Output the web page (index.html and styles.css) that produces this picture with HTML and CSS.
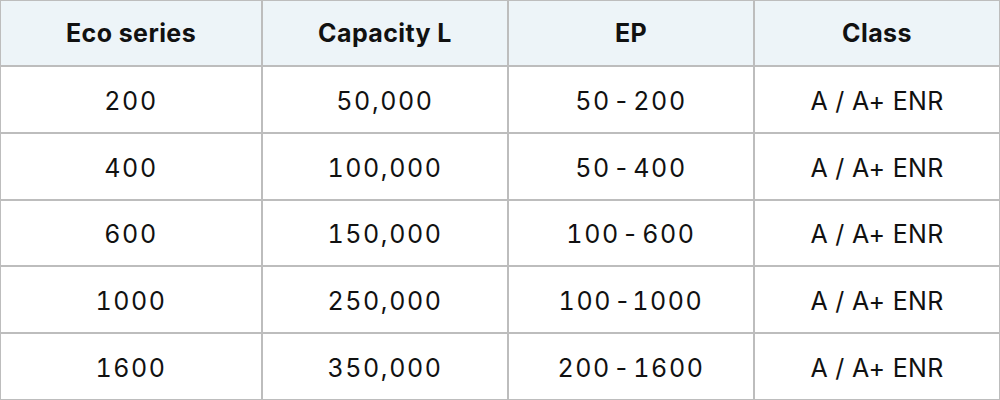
FILE: index.html
```html
<!DOCTYPE html>
<html>
<head>
<meta charset="utf-8">
<link rel="stylesheet" href="styles.css">
</head>
<body>
<div class="table" role="table">
  <div class="cell head" role="columnheader">Eco series</div>
  <div class="cell head" role="columnheader">Capacity L</div>
  <div class="cell head" role="columnheader">EP</div>
  <div class="cell head" role="columnheader">Class</div>

  <div class="cell num">200</div>
  <div class="cell num">50,000</div>
  <div class="cell num">50 - 200</div>
  <div class="cell txt">A / A+ ENR</div>

  <div class="cell num">400</div>
  <div class="cell num">100,000</div>
  <div class="cell num">50 - 400</div>
  <div class="cell txt">A / A+ ENR</div>

  <div class="cell num">600</div>
  <div class="cell num">150,000</div>
  <div class="cell num">100 - 600</div>
  <div class="cell txt">A / A+ ENR</div>

  <div class="cell num">1000</div>
  <div class="cell num">250,000</div>
  <div class="cell num">100 -1000</div>
  <div class="cell txt">A / A+ ENR</div>

  <div class="cell num">1600</div>
  <div class="cell num">350,000</div>
  <div class="cell num">200 - 1600</div>
  <div class="cell txt">A / A+ ENR</div>
</div>
</body>
</html>
```

FILE: styles.css
```css
html, body {
  margin: 0;
  padding: 0;
  background: #ffffff;
}

.table {
  box-sizing: border-box;
  width: 1000px;
  height: 400px;
  padding: 1px;
  background: #bdbdbd;
  display: grid;
  grid-template-columns: 260px 244px 244px 244px;
  grid-template-rows: 64px 65px 65px 64px 65px 65px;
  gap: 2px;
  font-family: "Inter", "Noto Sans", sans-serif;
  color: #111111;
}

.cell {
  background: #ffffff;
  display: flex;
  align-items: center;
  justify-content: center;
  font-size: 25px;
  font-weight: 400;
  padding-top: 2px;
}

.num {
  font-variant-numeric: tabular-nums;
  letter-spacing: 1.6px;
  word-spacing: -6px;
}

.txt {
  letter-spacing: 0.3px;
}

.head {
  background: #edf4f8;
  font-size: 25px;
  font-weight: 700;
  letter-spacing: 0.4px;
  padding-top: 0;
}
```
